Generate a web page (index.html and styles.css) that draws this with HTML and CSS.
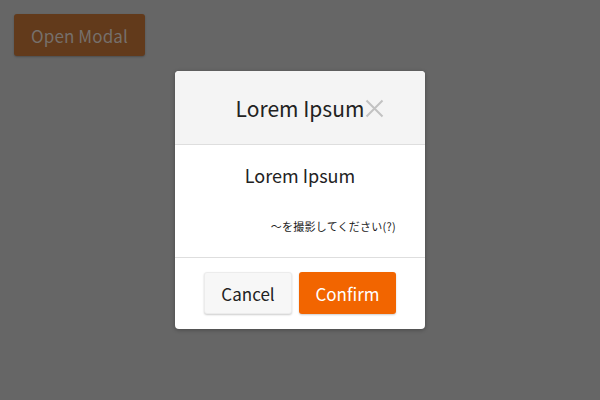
FILE: index.html
```html
<!DOCTYPE html>
<html lang="ja">
<head>
<meta charset="utf-8">
<link rel="stylesheet" href="styles.css">
</head>
<body>
<div class="page">
  <button class="open-btn">Open Modal</button>
</div>
<div class="overlay">
  <div class="modal">
    <div class="modal-header">
      <span class="title">Lorem Ipsum<svg class="close" width="19" height="19" viewBox="0 0 19 19"><path d="M1.5 1.5 L17.5 17.5 M17.5 1.5 L1.5 17.5" stroke="#c2c2c2" stroke-width="2" fill="none"/></svg></span>
    </div>
    <div class="modal-body">
      <div class="body-title">Lorem Ipsum</div>
      <div class="note">〜を撮影してください(?)</div>
    </div>
    <div class="modal-footer">
      <button class="btn btn-cancel">Cancel</button>
      <button class="btn btn-confirm">Confirm</button>
    </div>
  </div>
</div>
</body>
</html>
```
FILE: styles.css
```css
html, body {
  margin: 0;
  padding: 0;
  width: 600px;
  height: 400px;
  overflow: hidden;
  font-family: "Noto Sans CJK JP", "Noto Sans", sans-serif;
  background: #666666;
}
.page {
  padding: 14px;
}
.open-btn {
  font-family: inherit;
  width: 131px;
  height: 42px;
  border: none;
  border-radius: 3px;
  background: #623a1b;
  color: #76706b;
  font-size: 17px;
  letter-spacing: 0.1px;
  box-shadow: 0 1px 2px rgba(0,0,0,0.25);
  padding: 0;
}
.overlay {
  position: absolute;
  inset: 0;
  display: flex;
  justify-content: center;
  align-items: flex-start;
  padding-top: 71px;
}
.modal {
  width: 250px;
  background: #fff;
  border-radius: 4px;
  overflow: hidden;
  box-shadow: 0 1px 4px rgba(0,0,0,0.3);
}
.modal-header {
  height: 73px;
  background: #f4f4f4;
  border-bottom: 1px solid #dedede;
  display: flex;
  align-items: center;
  justify-content: center;
}
.title {
  position: relative;
  font-size: 21px;
  color: #222;
  line-height: 1;
  margin-top: 1px;
}
.close {
  position: absolute;
  left: 100%;
  top: 1px;
  margin-left: 1px;
}
.modal-body {
  height: 112px;
  border-bottom: 1px solid #dedede;
  display: flex;
  flex-direction: column;
  padding: 0 29px;
}
.body-title {
  text-align: center;
  font-size: 18px;
  color: #222;
  line-height: 1;
  margin-top: 21px;
}
.note {
  text-align: right;
  font-size: 11px;
  letter-spacing: 0.25px;
  color: #222;
  line-height: 1;
  margin-top: 37px;
}
.modal-footer {
  display: flex;
  justify-content: center;
  gap: 7px;
  padding: 14px 0 15px;
}
.btn {
  font-family: inherit;
  height: 42px;
  border-radius: 3px;
  font-size: 17px;
  letter-spacing: 0;
  padding: 0;
  cursor: pointer;
}
.btn-cancel {
  width: 88px;
  background: #f7f7f7;
  border: 1px solid #ececec;
  color: #222;
  box-shadow: 0 1px 2px rgba(0,0,0,0.2);
}
.btn-confirm {
  width: 97px;
  background: #f26500;
  border: none;
  color: #fff;
  box-shadow: 0 1px 2px rgba(0,0,0,0.2);
}
```
